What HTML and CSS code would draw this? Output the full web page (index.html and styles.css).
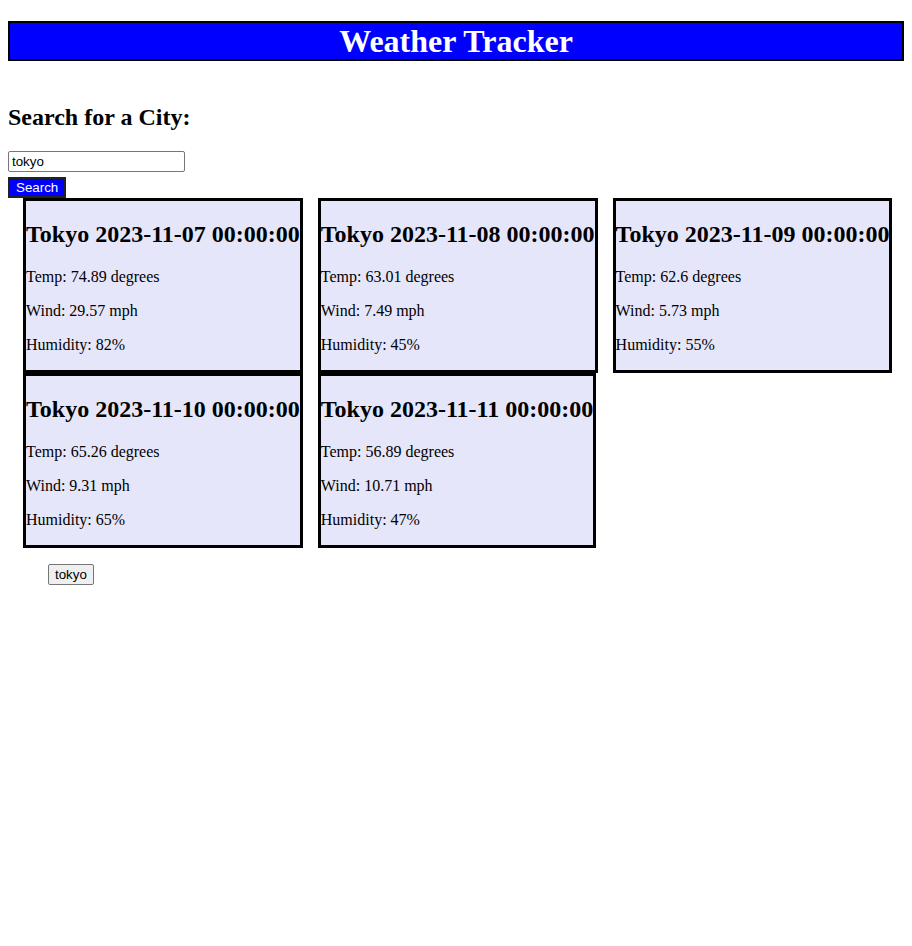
FILE: index.html
```html
<!DOCTYPE html>
<html lang="en">
<head>
<meta charset="utf-8">
<title>Weather Tracker</title>
<link rel="stylesheet" href="styles.css">
</head>
<body>
<h1 class="title">Weather Tracker</h1>
<h2 class="search-heading">Search for a City:</h2>
<form class="search-form">
  <input class="city-input" type="text" value="tokyo">
  <button class="search-btn" type="button">Search</button>
</form>
<div class="cards">
  <div class="card">
    <h2 class="card-title">Tokyo 2023-11-07 00:00:00</h2>
    <p class="card-line">Temp: 74.89 degrees</p>
    <p class="card-line">Wind: 29.57 mph</p>
    <p class="card-line">Humidity: 82%</p>
  </div>
  <div class="card">
    <h2 class="card-title">Tokyo 2023-11-08 00:00:00</h2>
    <p class="card-line">Temp: 63.01 degrees</p>
    <p class="card-line">Wind: 7.49 mph</p>
    <p class="card-line">Humidity: 45%</p>
  </div>
  <div class="card">
    <h2 class="card-title">Tokyo 2023-11-09 00:00:00</h2>
    <p class="card-line">Temp: 62.6 degrees</p>
    <p class="card-line">Wind: 5.73 mph</p>
    <p class="card-line">Humidity: 55%</p>
  </div>
  <div class="card">
    <h2 class="card-title">Tokyo 2023-11-10 00:00:00</h2>
    <p class="card-line">Temp: 65.26 degrees</p>
    <p class="card-line">Wind: 9.31 mph</p>
    <p class="card-line">Humidity: 65%</p>
  </div>
  <div class="card">
    <h2 class="card-title">Tokyo 2023-11-11 00:00:00</h2>
    <p class="card-line">Temp: 56.89 degrees</p>
    <p class="card-line">Wind: 10.71 mph</p>
    <p class="card-line">Humidity: 47%</p>
  </div>
</div>
<ul class="history">
  <li class="history-item"><button class="history-btn" type="button">tokyo</button></li>
</ul>
</body>
</html>
```
FILE: styles.css
```css
body {
  margin: 8px;
  font-family: "Liberation Serif", "Times New Roman", serif;
  font-size: 16px;
  color: #000;
  background: #fff;
}

.title {
  margin: 13px 0 0;
  font-size: 32px;
  font-weight: bold;
  line-height: 36px;
  text-align: center;
  color: #fff;
  background: #0000ff;
  border: 2px solid #000;
}

.search-heading {
  margin: 43px 0 20px;
  font-size: 24px;
  line-height: 27px;
}

.search-form {
  display: flex;
  flex-direction: column;
  align-items: flex-start;
  gap: 5px;
}

.city-input {
  box-sizing: border-box;
  width: 177px;
  height: 21px;
  margin: 0;
  padding: 1px 3px;
  font-family: "Liberation Sans", Arial, sans-serif;
  font-size: 13.33px;
  border: 1px solid #767676;
  border-radius: 2px;
}

.search-btn {
  box-sizing: border-box;
  height: 21px;
  margin: 0;
  padding: 1px 6px;
  font-family: "Liberation Sans", Arial, sans-serif;
  font-size: 13.33px;
  color: #fff;
  background: #0000ff;
  border: 2px solid #222;
  border-radius: 0;
}

.cards {
  display: flex;
  flex-wrap: wrap;
  column-gap: 15px;
  padding-left: 15px;
}

.card {
  background: #e6e6fa;
  border: 3px solid #000;
}

.card-title {
  margin: 20px 0;
  font-size: 24px;
  line-height: 27px;
  white-space: nowrap;
}

.card-line {
  margin: 16px 0;
  line-height: 18px;
}

.history {
  margin: 16px 0;
  padding-left: 40px;
  list-style: none;
}

.history-btn {
  box-sizing: border-box;
  height: 21px;
  margin: 0;
  padding: 1px 6px;
  font-family: "Liberation Sans", Arial, sans-serif;
  font-size: 13.33px;
  color: #000;
  background: #efefef;
  border: 1px solid #767676;
  border-radius: 2px;
}
```
